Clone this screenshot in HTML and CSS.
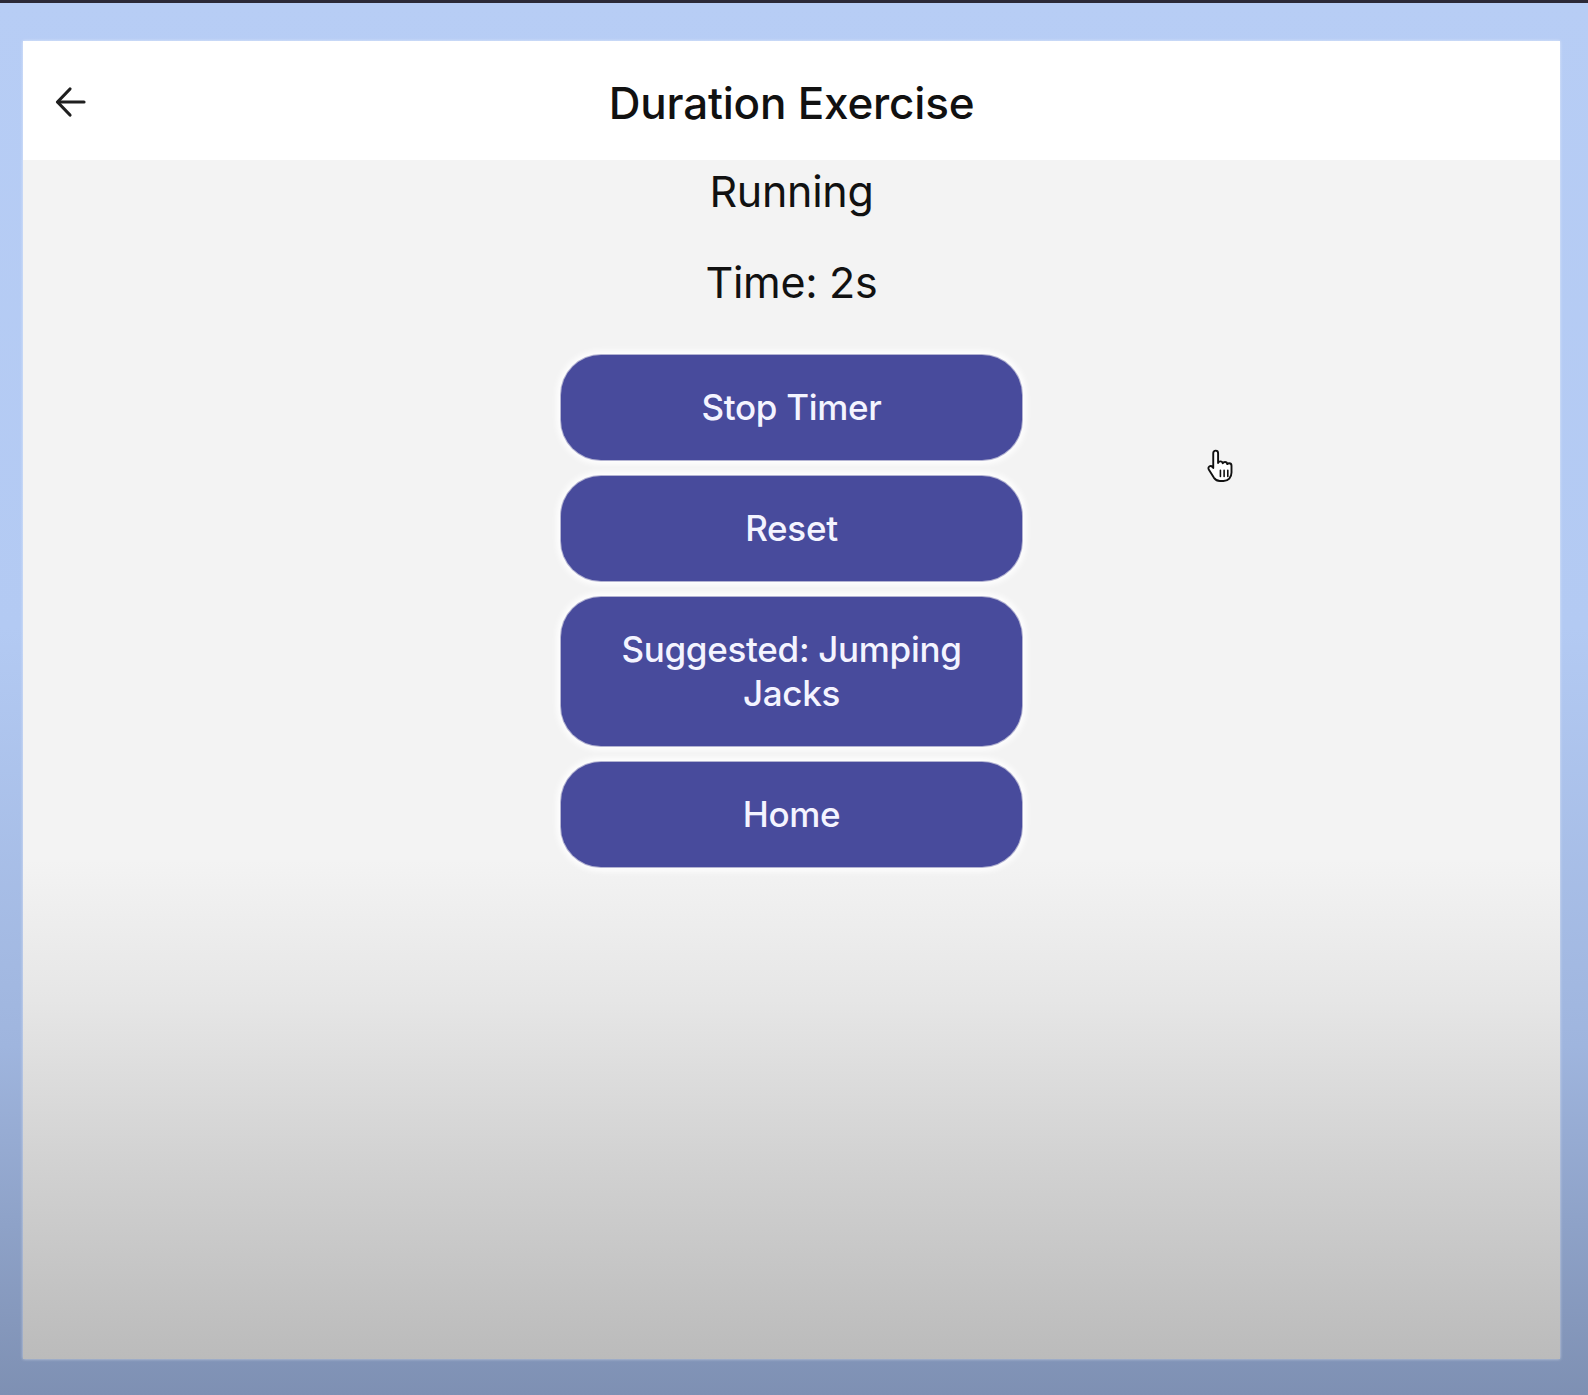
FILE: index.html
```html
<!DOCTYPE html>
<html lang="en">
<head>
<meta charset="utf-8">
<title>Duration Exercise</title>
<link rel="stylesheet" href="styles.css">
</head>
<body>
<div class="topline"></div>
<div class="frame">
  <header class="header">
    <button class="back" aria-label="Back">
      <svg width="34" height="34" viewBox="0 0 34 34" fill="none" stroke="#1f1f1f" stroke-width="3.2" stroke-linecap="round" stroke-linejoin="round">
        <path d="M30 17H4"/>
        <path d="M16 4L3.5 17L16 30"/>
      </svg>
    </button>
    <h1 class="title">Duration Exercise</h1>
  </header>
  <main class="content">
    <p class="status">Running</p>
    <p class="time">Time: 2s</p>
    <div class="actions">
      <button class="btn">Stop Timer</button>
      <button class="btn">Reset</button>
      <button class="btn">Suggested: Jumping Jacks</button>
      <button class="btn">Home</button>
    </div>
    <svg class="cursor" width="32" height="38" viewBox="0 0 30 36">
      <path d="M9 2.5c1.4 0 2.3 1 2.3 2.4v9.3c.4-1 1.2-1.5 2.2-1.5 1.2 0 2 .8 2.2 1.8.4-.8 1.2-1.2 2.1-1.2 1.2 0 2.1.9 2.2 2 .4-.6 1-.9 1.8-.9 1.3 0 2.2 1 2.2 2.4v6.5c0 4.5-3 8-7.6 8h-3.4c-2.6 0-4.2-1.1-5.6-3L2.6 20.6c-.8-1.1-.6-2.4.4-3.1 1-.7 2.2-.4 3 .5l.7.9V4.9C6.7 3.5 7.6 2.5 9 2.5z" fill="#fff" stroke="#111" stroke-width="1.8" stroke-linejoin="round"/>
      <path d="M13.5 21v6M17 21v6M20.5 21v6" stroke="#111" stroke-width="1.5" stroke-linecap="round"/>
    </svg>
  </main>
</div>
</body>
</html>
```

FILE: styles.css
```css
* {
  box-sizing: border-box;
}

html, body {
  margin: 0;
  padding: 0;
}

body {
  width: 1588px;
  height: 1395px;
  overflow: hidden;
  font-family: Inter, "Noto Sans", "Liberation Sans", sans-serif;
  background: linear-gradient(to bottom, #b7cdf5 0%, #b3caf3 45%, #9fb5de 75%, #7e90b3 100%);
}

.topline {
  height: 3px;
  background: #2b2937;
}

.frame {
  margin: 38px 0 0 23px;
  width: 1537px;
  height: 1318px;
  display: flex;
  flex-direction: column;
  box-shadow: 0 0 3px rgba(255, 255, 255, 0.6);
}

.header {
  position: relative;
  height: 119px;
  background: #ffffff;
  display: flex;
  align-items: center;
  justify-content: center;
}

.back {
  position: absolute;
  left: 31px;
  top: 44px;
  padding: 0;
  border: 0;
  background: none;
  line-height: 0;
}

.title {
  margin: 4px 0 0;
  font-size: 44px;
  font-weight: 500;
  color: #111;
  letter-spacing: -0.2px;
}

.content {
  position: relative;
  flex: 1;
  display: flex;
  flex-direction: column;
  align-items: center;
  background: linear-gradient(to bottom, #f3f3f3 0px, #f3f3f3 700px, #e6e6e6 840px, #d2d2d2 1000px, #bbbbbb 100%);
}

.status,
.time {
  margin: 0;
  font-size: 43px;
  font-weight: 400;
  color: #111;
  line-height: 52px;
  letter-spacing: -0.3px;
}

.status {
  margin-top: 5px;
}

.time {
  margin-top: 39px;
}

.actions {
  margin-top: 47px;
  display: flex;
  flex-direction: column;
  gap: 16px;
}

.btn {
  width: 461px;
  padding: 30px 40px 31px;
  border: 0;
  border-radius: 40px;
  background: #484b9c;
  color: #f4f4ff;
  font-family: Inter, "Noto Sans", "Liberation Sans", sans-serif;
  font-size: 35px;
  font-weight: 500;
  line-height: 44px;
  letter-spacing: -0.3px;
  box-shadow: 0 0 0 1px rgba(40, 40, 130, 0.35), 0 0 6px 4px #ffffff;
}

.cursor {
  position: absolute;
  left: 1183px;
  top: 288px;
}
```
